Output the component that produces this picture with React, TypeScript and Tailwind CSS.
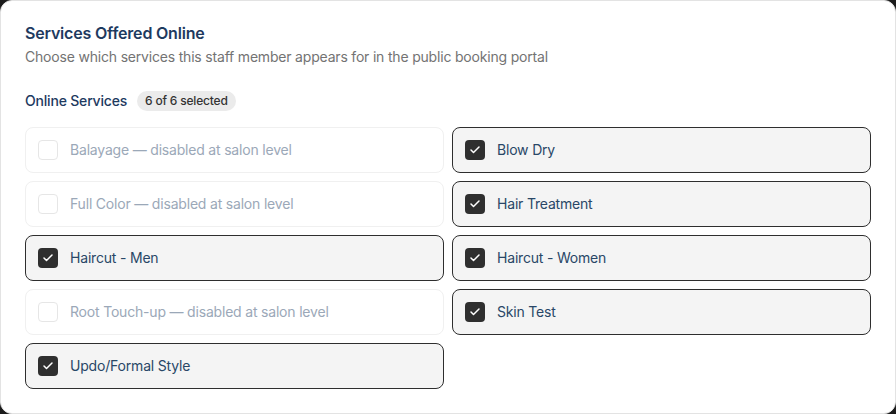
import { Check } from "lucide-react";

const services = [
  { name: "Balayage", disabled: true },
  { name: "Blow Dry", checked: true },
  { name: "Full Color", disabled: true },
  { name: "Hair Treatment", checked: true },
  { name: "Haircut - Men", checked: true },
  { name: "Haircut - Women", checked: true },
  { name: "Root Touch-up", disabled: true },
  { name: "Skin Test", checked: true },
  { name: "Updo/Formal Style", checked: true },
];

function ServiceRow({ name, checked, disabled }: { name: string; checked?: boolean; disabled?: boolean }) {
  if (disabled) {
    return (
      <div className="flex h-[46px] items-center gap-3 rounded-lg border border-[#f0f0f0] bg-white px-3">
        <span className="h-5 w-5 shrink-0 rounded border border-[#e6e6e6] bg-white" />
        <span className="text-sm text-[#9ba8b8]">{name} — disabled at salon level</span>
      </div>
    );
  }
  return (
    <div className="flex h-[46px] items-center gap-3 rounded-lg border border-[#2e2e2e] bg-[#f4f4f4] px-3">
      <span className="flex h-5 w-5 shrink-0 items-center justify-center rounded bg-[#2f2f2f] text-white">
        {checked ? <Check size={12} strokeWidth={3} /> : null}
      </span>
      <span className="text-sm text-[#294767]">{name}</span>
    </div>
  );
}

export default function App() {
  const selected = services.filter((s) => s.checked).length;
  return (
    <div
      className="h-[414px] w-[896px] bg-[#1c1c1c] tracking-[-0.012em]"
      style={{ fontFamily: "Inter, 'Noto Sans', sans-serif" }}
    >
      <div className="h-full rounded-xl border border-[#e3e3e3] bg-white px-6 pt-5 pb-6">
        <h2 className="text-base leading-6 font-semibold text-[#1e3a5f]">Services Offered Online</h2>
        <p className="mt-0.5 text-sm text-[#737373]">Choose which services this staff member appears for in the public booking portal</p>
        <div className="mt-6 flex items-center gap-2.5">
          <span className="text-sm font-medium text-[#1e3a5f]">Online Services</span>
          <span className="rounded-full bg-[#ebebeb] px-2 py-0.5 text-xs font-medium text-[#333]">
            {selected} of {selected} selected
          </span>
        </div>
        <div className="mt-4 grid grid-cols-2 gap-x-2 gap-y-2">
          {services.map((s) => (
            <ServiceRow key={s.name} {...s} />
          ))}
        </div>
      </div>
    </div>
  );
}
